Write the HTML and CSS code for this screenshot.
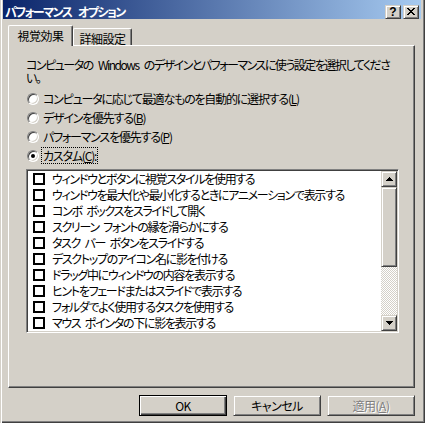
FILE: index.html
```html
<!DOCTYPE html>
<html lang="ja">
<head>
<meta charset="utf-8">
<title>パフォーマンス オプション</title>
<link rel="stylesheet" href="styles.css">
</head>
<body>
<div class="window">
  <div class="titlebar">
    <span class="title">パフォーマンス オプション</span>
    <div class="tbtns">
      <span class="tbtn raised help">?</span>
      <span class="tbtn raised close"><svg width="8" height="7" viewBox="0 0 8 7" shape-rendering="crispEdges"><path d="M0 0h2v1h-2zM6 0h2v1h-2zM1 1h2v1h-2zM5 1h2v1h-2zM2 2h4v1h-4zM3 3h2v1h-2zM2 4h4v1h-4zM1 5h2v1h-2zM5 5h2v1h-2zM0 6h2v1h-2zM6 6h2v1h-2z" fill="#000"/></svg></span>
    </div>
  </div>
  <div class="client">
    <div class="tabs">
      <div class="tab active">視覚効果</div>
      <div class="tab">詳細設定</div>
    </div>
    <div class="panel">
      <p class="desc">コンピュータの Windows のデザインとパフォーマンスに使う設定を選択してくださ<br>い。</p>
      <div class="radios">
        <div class="radio"><span class="rb"></span><span class="rl">コンピュータに応じて最適なものを自動的に選択する(<u>L</u>)</span></div>
        <div class="radio"><span class="rb"></span><span class="rl">デザインを優先する(<u>B</u>)</span></div>
        <div class="radio"><span class="rb"></span><span class="rl">パフォーマンスを優先する(<u>P</u>)</span></div>
        <div class="radio"><span class="rb on"></span><span class="rl focus">カスタム(<u>C</u>):</span></div>
      </div>
      <div class="listbox">
        <ul class="items">
          <li><span class="cb"></span>ウィンドウとボタンに視覚スタイルを使用する</li>
          <li><span class="cb"></span>ウィンドウを最大化や最小化するときにアニメーションで表示する</li>
          <li><span class="cb"></span>コンボ ボックスをスライドして開く</li>
          <li><span class="cb"></span>スクリーン フォントの縁を滑らかにする</li>
          <li><span class="cb"></span>タスク バー ボタンをスライドする</li>
          <li><span class="cb"></span>デスクトップのアイコン名に影を付ける</li>
          <li><span class="cb"></span>ドラッグ中にウィンドウの内容を表示する</li>
          <li><span class="cb"></span>ヒントをフェードまたはスライドで表示する</li>
          <li><span class="cb"></span>フォルダでよく使用するタスクを使用する</li>
          <li><span class="cb"></span>マウス ポインタの下に影を表示する</li>
        </ul>
        <div class="scrollbar">
          <div class="sbtn raised"><svg width="7" height="4" viewBox="0 0 7 4" shape-rendering="crispEdges"><path d="M3 0h1v1h-1zM2 1h3v1h-3zM1 2h5v1h-5zM0 3h7v1h-7z" fill="#000"/></svg></div>
          <div class="thumb raised"></div>
          <div class="track"></div>
          <div class="sbtn raised"><svg width="7" height="4" viewBox="0 0 7 4" shape-rendering="crispEdges"><path d="M0 0h7v1h-7zM1 1h5v1h-5zM2 2h3v1h-3zM3 3h1v1h-1z" fill="#000"/></svg></div>
        </div>
      </div>
    </div>
    <div class="buttons">
      <button class="btn default">OK</button>
      <button class="btn raised">キャンセル</button>
      <button class="btn raised disabled">適用(<u>A</u>)</button>
    </div>
  </div>
</div>
</body>
</html>
```

FILE: styles.css
```css
* { box-sizing: border-box; margin: 0; padding: 0; }

body {
  margin: 0;
  background: #D4D0C8;
  font-family: "Noto Sans CJK JP", "Noto Sans", sans-serif;
  font-size: 12px;
  font-feature-settings: "palt";
  letter-spacing: -1px;
  word-spacing: 3px;
  color: #000;
}

.window {
  width: 425px;
  height: 423px;
  padding: 0 4px 4px 3px;
  background: #D4D0C8;
  box-shadow: inset 1px 0 #D4D0C8, inset 2px 0 #fff, inset -1px -1px #404040, inset -2px -2px #808080;
  display: flex;
  flex-direction: column;
}

.raised {
  background: #D4D0C8;
  border: 1px solid;
  border-color: #D4D0C8 #404040 #404040 #D4D0C8;
  box-shadow: inset 1px 1px #fff, inset -1px -1px #808080;
}

.titlebar {
  height: 19px;
  background: linear-gradient(to right, #0A246A, #A6CAF0);
  display: flex;
  align-items: center;
  justify-content: space-between;
  padding: 4px 2px 0 2px;
}

.title {
  color: #fff;
  font-weight: bold;
  font-size: 12px;
  line-height: 14px;
  letter-spacing: -1.5px;
  word-spacing: 5px;
}

.tbtns { display: flex; gap: 2px; }

.tbtn {
  width: 16px;
  height: 14px;
  display: flex;
  align-items: center;
  justify-content: center;
}

.help {
  font-family: "Liberation Sans", sans-serif;
  font-weight: bold;
  font-size: 12px;
  line-height: 12px;
  letter-spacing: 0;
}

.client {
  flex: 1;
  display: flex;
  flex-direction: column;
  padding: 6px 6px 0 5px;
}

.tabs {
  display: flex;
  align-items: flex-end;
  height: 20px;
  position: relative;
  z-index: 1;
}

.tab {
  height: 17px;
  width: 59px;
  padding-top: 3px;
  line-height: 14px;
  text-align: center;
  border-top: 1px solid #fff;
  border-left: 1px solid #fff;
  border-right: 1px solid #404040;
  box-shadow: inset -1px 0 #808080;
  border-radius: 2px 2px 0 0;
  background: #D4D0C8;
  letter-spacing: -0.5px;
}

.tab.active {
  width: 65px;
  height: 21px;
  margin-bottom: -1px;
}

.panel {
  height: 343px;
  border: 1px solid;
  border-color: #fff #404040 #404040 #fff;
  box-shadow: inset -1px -1px #808080;
  padding: 12px 14px 0 17px;
}

.desc {
  line-height: 13px;
  white-space: nowrap;
  letter-spacing: -1.5px;
  word-spacing: 4px;
}

.radios {
  margin-top: 5px;
  display: flex;
  flex-direction: column;
}

.radio {
  height: 19px;
  display: flex;
  align-items: center;
  gap: 2px;
}

.rb {
  width: 12px;
  height: 12px;
  margin-left: 1px;
  border-radius: 50%;
  background: #fff;
  border: 1px solid;
  border-color: #808080 #fff #fff #808080;
  box-shadow: inset 1px 1px #404040, inset -1px -1px #D4D0C8;
  position: relative;
  flex: none;
}

.rb.on::after {
  content: "";
  position: absolute;
  left: 3px;
  top: 3px;
  width: 4px;
  height: 4px;
  border-radius: 50%;
  background: #000;
}

.rl {
  padding: 0 1px;
  border: 1px solid transparent;
  line-height: 15px;
  letter-spacing: -1.2px;
}

.rl.focus { border: 1px dotted #000; }

.listbox {
  margin-top: 4px;
  width: 373px;
  height: 164px;
  border: 1px solid;
  border-color: #808080 #fff #fff #808080;
  box-shadow: inset 1px 1px #404040, inset -1px -1px #D4D0C8;
  background: #fff;
  padding: 1px;
  display: flex;
}

.items {
  list-style: none;
  flex: 1;
  overflow: hidden;
}

.items li {
  height: 16px;
  display: flex;
  align-items: center;
  padding-left: 5px;
  gap: 7px;
  white-space: nowrap;
  line-height: 16px;
  letter-spacing: -1.3px;
}

.cb {
  width: 12px;
  height: 12px;
  border: 2px solid #000;
  background: #fff;
  flex: none;
}

.scrollbar {
  width: 16px;
  display: flex;
  flex-direction: column;
}

.sbtn {
  height: 16px;
  display: flex;
  align-items: center;
  justify-content: center;
}

.sbtn svg { display: block; }

.thumb { height: 80px; }

.track {
  flex: 1;
  background: repeating-conic-gradient(#fff 0 25%, #D4D0C8 0 50%) 0 0 / 2px 2px;
}

.buttons {
  display: flex;
  justify-content: flex-end;
  gap: 6px;
  margin-top: 7px;
}

.btn {
  width: 88px;
  height: 21px;
  font-family: inherit;
  font-size: 12px;
  font-feature-settings: "palt";
  letter-spacing: -0.5px;
  line-height: 17px;
  color: #000;
  text-align: center;
}

.btn.default {
  background: #D4D0C8;
  border: 1px solid #000;
  box-shadow: inset 1px 1px #fff, inset -1px -1px #404040, inset -2px -2px #808080;
}

.btn.disabled {
  color: #808080;
  text-shadow: 1px 1px #fff;
}
```
